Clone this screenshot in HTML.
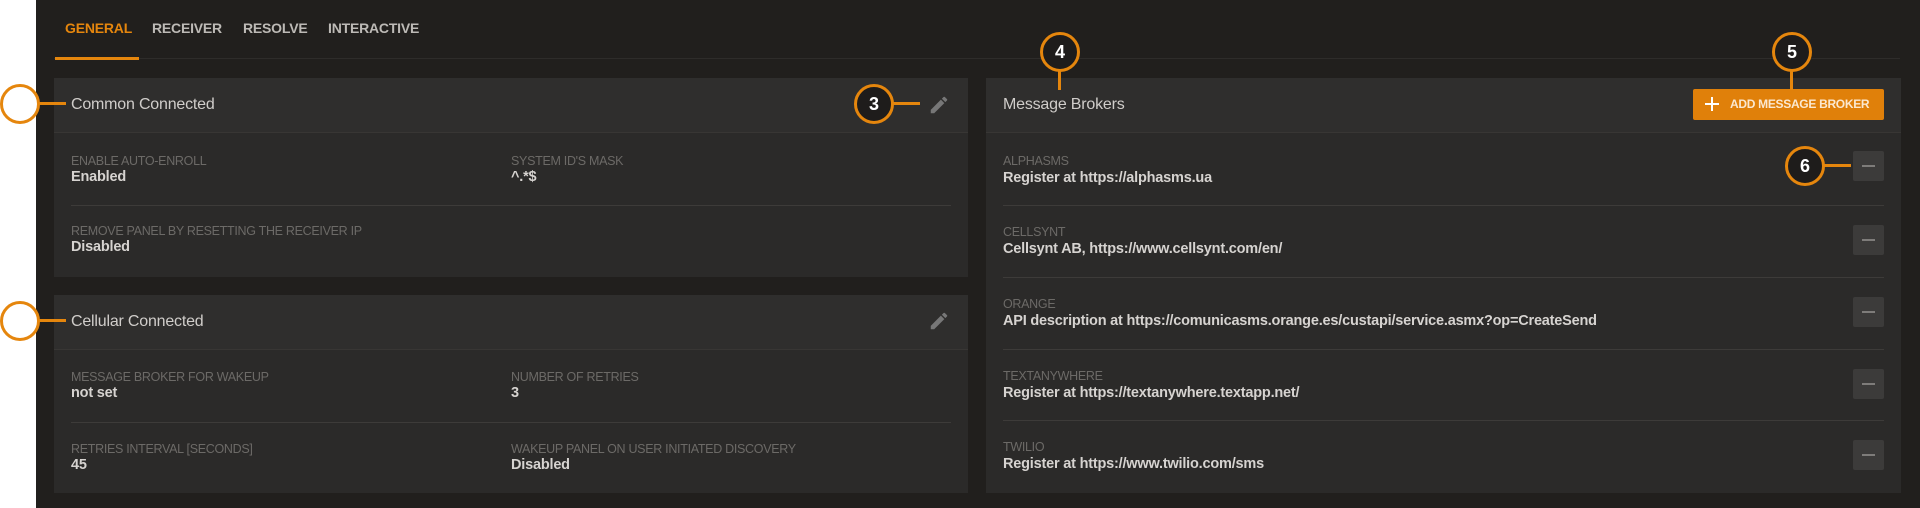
<!DOCTYPE html>
<html><head><style>
*{margin:0;padding:0;box-sizing:border-box}
body{width:1920px;height:508px;background:#fff;font-family:"Liberation Sans",Arial,sans-serif;position:relative;overflow:hidden}
.main{position:absolute;left:36px;top:0;width:1884px;height:508px;background:#211f1d}
.a{position:absolute}
.tab{position:absolute;top:20px;font-size:14px;font-weight:bold;color:#bdbab6;letter-spacing:-0.2px}
.card{position:absolute;background:#2b2a29}
.hdr{position:absolute;left:0;right:0;top:0;height:55px;background:#2f2e2d;border-bottom:1px solid #383634}
.title{position:absolute;left:17px;top:18px;font-size:16px;color:#d0cdca;letter-spacing:-0.2px}
.lbl{position:absolute;font-size:12.5px;color:#6c6a67;letter-spacing:-0.3px}
.val{position:absolute;font-size:14.5px;font-weight:bold;color:#d6d3d0;letter-spacing:-0.2px}
.div{position:absolute;height:1px;background:#3d3b39}
.circ{position:absolute;width:40px;height:40px;border:3px solid #e5860d;border-radius:50%;background:#1e1c1b;color:#fff;font-weight:bold;font-size:18px;text-align:center;line-height:34px}
.ln{position:absolute;background:#e5860d}
.minus{position:absolute;left:1853px;width:31px;height:30px;background:#3c3b3a;border-radius:2px}
.minus:after{content:"";position:absolute;left:9px;top:14px;width:13px;height:2px;background:#7e7c7a}
</style></head><body>
<div class="main"></div>
<div class="tab" style="left:65px;color:#e5860d">GENERAL</div>
<div class="tab" style="left:152px">RECEIVER</div>
<div class="tab" style="left:243px">RESOLVE</div>
<div class="tab" style="left:328px">INTERACTIVE</div>
<div class="a" style="left:54px;top:58px;width:1846px;height:1px;background:#2e2c2a"></div>
<div class="a" style="left:55px;top:57px;width:84px;height:3px;background:#e5860d"></div>

<div class="card" style="left:54px;top:78px;width:914px;height:199px">
 <div class="hdr"><div class="title">Common Connected</div></div>
 <div class="lbl" style="left:17px;top:76px">ENABLE AUTO-ENROLL</div>
 <div class="val" style="left:17px;top:91px">Enabled</div>
 <div class="lbl" style="left:457px;top:76px">SYSTEM ID'S MASK</div>
 <div class="val" style="left:457px;top:91px">^.*$</div>
 <div class="div" style="left:17px;right:17px;top:127px"></div>
 <div class="lbl" style="left:17px;top:146px">REMOVE PANEL BY RESETTING THE RECEIVER IP</div>
 <div class="val" style="left:17px;top:161px">Disabled</div>
</div>
<div class="card" style="left:54px;top:295px;width:914px;height:198px">
 <div class="hdr"><div class="title">Cellular Connected</div></div>
 <div class="lbl" style="left:17px;top:75px">MESSAGE BROKER FOR WAKEUP</div>
 <div class="val" style="left:17px;top:90px">not set</div>
 <div class="lbl" style="left:457px;top:75px">NUMBER OF RETRIES</div>
 <div class="val" style="left:457px;top:90px">3</div>
 <div class="div" style="left:17px;right:17px;top:127px"></div>
 <div class="lbl" style="left:17px;top:147px">RETRIES INTERVAL [SECONDS]</div>
 <div class="val" style="left:17px;top:162px">45</div>
 <div class="lbl" style="left:457px;top:147px">WAKEUP PANEL ON USER INITIATED DISCOVERY</div>
 <div class="val" style="left:457px;top:162px">Disabled</div>
</div>
<svg class="a" style="left:928px;top:94px" width="22" height="22" viewBox="0 0 24 24"><path fill="#777" d="M3 17.25V21h3.75L17.81 9.94l-3.75-3.75L3 17.25zM20.71 7.04a1 1 0 000-1.41l-2.34-2.34a1 1 0 00-1.41 0l-1.830 1.83 3.75 3.75 1.83-1.83z"/></svg>
<svg class="a" style="left:928px;top:310px" width="22" height="22" viewBox="0 0 24 24"><path fill="#777" d="M3 17.25V21h3.75L17.81 9.94l-3.75-3.75L3 17.25zM20.71 7.04a1 1 0 000-1.41l-2.34-2.34a1 1 0 00-1.41 0l-1.83 1.83 3.75 3.75 1.83-1.83z"/></svg>

<div class="card" style="left:986px;top:78px;width:915px;height:415px">
 <div class="hdr"><div class="title">Message Brokers</div></div>
 <div class="a" style="left:707px;top:11px;width:191px;height:31px;background:#e0800a;border-radius:2px;color:#fbe8d0;font-size:12px;font-weight:bold;line-height:31px;padding-left:37px;letter-spacing:-0.3px;white-space:nowrap">ADD MESSAGE BROKER<div class="a" style="left:12px;top:14px;width:14px;height:2px;background:#fff"></div><div class="a" style="left:18px;top:8px;width:2px;height:14px;background:#fff"></div></div>
 <div class="lbl" style="left:17px;top:76px">ALPHASMS</div>
 <div class="val" style="left:17px;top:92px">Register at https://alphasms.ua</div>
 <div class="div" style="left:17px;right:17px;top:127px"></div>
 <div class="lbl" style="left:17px;top:147px">CELLSYNT</div>
 <div class="val" style="left:17px;top:163px">Cellsynt AB, https://www.cellsynt.com/en/</div>
 <div class="div" style="left:17px;right:17px;top:199px"></div>
 <div class="lbl" style="left:17px;top:219px">ORANGE</div>
 <div class="val" style="left:17px;top:235px">API description at https://comunicasms.orange.es/custapi/service.asmx?op=CreateSend</div>
 <div class="div" style="left:17px;right:17px;top:271px"></div>
 <div class="lbl" style="left:17px;top:291px">TEXTANYWHERE</div>
 <div class="val" style="left:17px;top:307px">Register at https://textanywhere.textapp.net/</div>
 <div class="div" style="left:17px;right:17px;top:342px"></div>
 <div class="lbl" style="left:17px;top:362px">TWILIO</div>
 <div class="val" style="left:17px;top:378px">Register at https://www.twilio.com/sms</div>
</div>
<div class="minus" style="top:151px"></div>
<div class="minus" style="top:225px"></div>
<div class="minus" style="top:297px"></div>
<div class="minus" style="top:369px"></div>
<div class="minus" style="top:440px"></div>

<div class="ln" style="left:36px;top:102px;width:30px;height:3px"></div>
<div class="circ" style="left:0;top:84px;background:#fff"></div>
<div class="ln" style="left:36px;top:319px;width:30px;height:3px"></div>
<div class="circ" style="left:0;top:301px;background:#fff"></div>
<div class="ln" style="left:890px;top:102px;width:30px;height:3px"></div>
<div class="circ" style="left:854px;top:84px">3</div>
<div class="ln" style="left:1058px;top:70px;width:3px;height:20px"></div>
<div class="circ" style="left:1040px;top:32px">4</div>
<div class="ln" style="left:1790px;top:70px;width:3px;height:20px"></div>
<div class="circ" style="left:1772px;top:32px">5</div>
<div class="ln" style="left:1820px;top:164px;width:31px;height:3px"></div>
<div class="circ" style="left:1785px;top:146px">6</div>
</body></html>
